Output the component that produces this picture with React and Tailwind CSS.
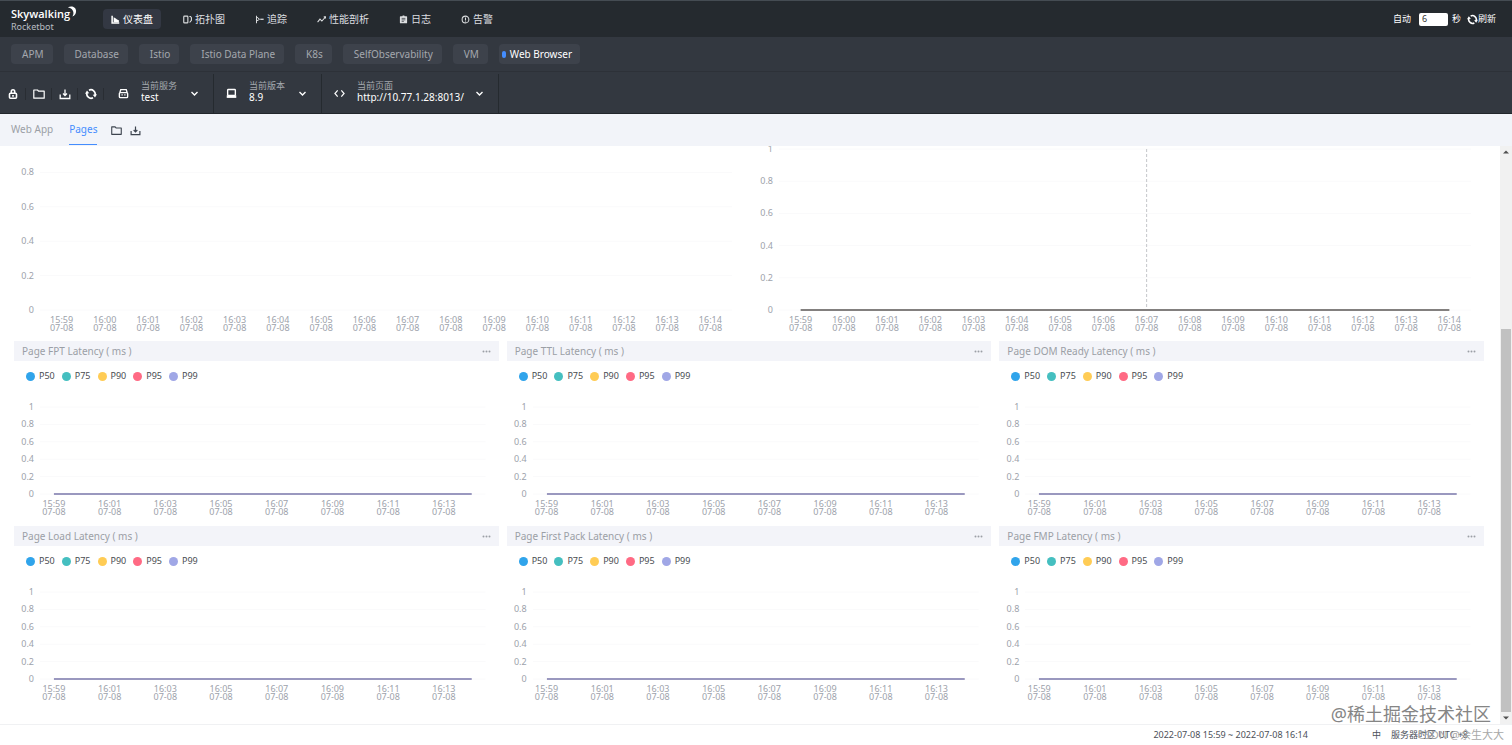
import React, { useState } from "react";

const TABS = [
    { name: "仪表盘", icon: "chart" },
    { name: "拓扑图", icon: "topology" },
    { name: "追踪", icon: "trace" },
    { name: "性能剖析", icon: "profile" },
    { name: "日志", icon: "log" },
    { name: "告警", icon: "alarm" },
];

const GROUPS = ["APM", "Database", "Istio", "Istio Data Plane", "K8s", "SelfObservability", "VM", "Web Browser"];

const TIMES = [
    "15:59", "16:00", "16:01", "16:02", "16:03", "16:04", "16:05", "16:06",
    "16:07", "16:08", "16:09", "16:10", "16:11", "16:12", "16:13", "16:14",
];

const TICKS = ["1", "0.8", "0.6", "0.4", "0.2", "0"];

const LEGEND = [
    { name: "P50", dot: "bg-[#30a4eb]" },
    { name: "P75", dot: "bg-[#45bfc0]" },
    { name: "P90", dot: "bg-[#ffcc55]" },
    { name: "P95", dot: "bg-[#ff6a84]" },
    { name: "P99", dot: "bg-[#a0a7e6]" },
];

const CARDS = [
    "Page FPT Latency ( ms )",
    "Page TTL Latency ( ms )",
    "Page DOM Ready Latency ( ms )",
    "Page Load Latency ( ms )",
    "Page First Pack Latency ( ms )",
    "Page FMP Latency ( ms )",
];

const ICONS = {
    chart: (
        <>
            <path d="M1.5 1v9.5H11" fill="none" stroke="currentColor" strokeWidth="2" />
            <path d="M3.5 3l3 1.5L8 6l2.5 1v2.5h-7z" fill="currentColor" />
        </>
    ),
    topology: (
        <g fill="none" stroke="currentColor" strokeWidth="1.5">
            <rect x="1" y="1.500" width="5.500" height="9" rx="1" />
            <path d="M8.500 2h1.500l1.200 1.500v3.500L8.800 10" />
        </g>
    ),
    trace: (
        <g fill="none" stroke="currentColor" strokeWidth="1.3">
            <path d="M2 1v10M2 2.500l4 3M2 8l4-2.200" />
            <path d="M7 5.700h4.500" strokeWidth="1.700" />
        </g>
    ),
    profile: <path d="M.8 9.500L4 5.500l2.500 2.500 4.500-5M9 2.500h2.300v2" fill="none" stroke="currentColor" strokeWidth="1.400" />,
    log: (
        <>
            <path fill="currentColor" d="M2 1.500h2.500L5 .5h2l.5 1H10a.8.8 0 01.8.8v8a.8.8 0 01-.8.8H2a.8.8 0 01-.8-.8v-8a.8.8 0 01.8-.8z" />
            <path d="M3.500 4.500h5M3.500 6.500h5M3.500 8.500h3" stroke="#252a2f" strokeWidth=".9" />
        </>
    ),
    alarm: (
        <g fill="none" stroke="currentColor" strokeWidth="1.4">
            <circle cx="6" cy="6" r="4.500" />
            <path d="M6 3.200v3.300M6 7.400v1.300" />
        </g>
    ),
    lock: (
        <g fill="none" stroke="currentColor" strokeWidth="1.6">
            <rect x="2.500" y="5.300" width="7" height="5" rx="1" />
            <path d="M4.300 5V3.500a1.700 1.700 0 013.400 0V5M6 7v1.800" />
        </g>
    ),
    folder: <path d="M.8 2h3.700l1 1.200h5.700v7H.8z" fill="none" stroke="currentColor" strokeWidth="1.200" strokeLinejoin="round" />,
    download: <path d="M1.200 6.500v4h9.600v-4M6 1.500v6M4 5.500l2 2 2-2" fill="none" stroke="currentColor" strokeWidth="1.300" />,
    refresh: (
        <>
            <path d="M4 2.200A4.300 4.300 0 0110 7.300M8 9.800A4.300 4.300 0 012 4.700" fill="none" stroke="currentColor" strokeWidth="1.700" />
            <path d="M12 6.300L10 9.500 7.800 6.700zM0 5.700L2 2.500l2.200 2.800z" fill="currentColor" />
        </>
    ),
    service: (
        <g fill="none" stroke="currentColor" strokeWidth="1.500">
            <rect x="1.500" y="5" width="9" height="5.500" rx="1" />
            <path d="M2 5l1-3.200h6L10 5M3.800 7.500h1.400M6.800 7.500h1.400" />
        </g>
    ),
    version: (
        <>
            <rect x="1.800" y="1.700" width="8.400" height="6.500" rx=".8" fill="none" stroke="currentColor" strokeWidth="1.500" />
            <path d="M.8 8h10.400v2.800H.8z" fill="currentColor" />
        </>
    ),
    code: <path d="M4 2.500L1 6l3 3.500M8 2.500L11 6 8 9.500" fill="none" stroke="currentColor" strokeWidth="1.300" />,
    down: <path d="M2 4l4 4 4-4" fill="none" stroke="currentColor" strokeWidth="1.800" />,
    more: (
        <g fill="currentColor">
            <circle cx="2" cy="6" r="1.300" />
            <circle cx="6" cy="6" r="1.300" />
            <circle cx="10" cy="6" r="1.300" />
        </g>
    ),
};

const Icon = ({ name, className = "size-3" }) => (
    <svg className={`shrink-0 ${className}`} viewBox="0 0 12 12" aria-hidden="true">
        {ICONS[name]}
    </svg>
);

const Logo = () => (
    <a href="#home" className="flex w-[92px] flex-col pl-[11px] text-white">
        <span className="flex items-start">
            <span className="font-['Open_Sans',sans-serif] text-[11px] leading-[16px] font-semibold">Skywalking</span>
            <svg className="-ml-1 size-[11px] shrink-0" viewBox="0 0 12 12" aria-hidden="true">
                <path d="M2 1.500C6-.8 11 1 11 5.500c0 3-1.500 5-4 6 1.500-2.500 1.500-5 .2-7C6 2.500 4 1.800 2 1.500z" fill="currentColor" />
            </svg>
        </span>
        <span className="text-[9px] leading-[10px] text-[#b9bdc2]">Rocketbot</span>
    </a>
);

const Header = () => {
    const [active, setActive] = useState("仪表盘");
    const [seconds, setSeconds] = useState("6");

    return (
        <header className="flex h-[37px] items-center border-t border-[#454c53] bg-[#252a2f] pr-4">
            <Logo />
            <nav className="ml-[11px] flex gap-3.5">
                {TABS.map((tab) => (
                    <button
                        key={tab.name}
                        type="button"
                        onClick={() => setActive(tab.name)}
                        className={`flex h-5 items-center gap-[3px] rounded-sm px-2 text-[10px] ${
                            active === tab.name ? "bg-[#333843] text-white" : "text-[#dcdee0]"
                        }`}
                    >
                        <Icon name={tab.icon} className="size-[9px]" />
                        {tab.name}
                    </button>
                ))}
            </nav>
            <div className="ml-auto flex items-center text-[9px] text-white">
                <label htmlFor="interval">自动</label>
                <input
                    id="interval"
                    value={seconds}
                    onChange={(e) => setSeconds(e.target.value)}
                    className="mr-1 ml-2 h-[13px] w-[29px] rounded-xs bg-white pl-[3px] text-[9px] text-[#333]"
                />
                <span>秒</span>
                <button type="button" className="ml-1.5 flex items-center">
                    <Icon name="refresh" className="size-[11px]" />
                    刷新
                </button>
            </div>
        </header>
    );
};

const Groups = () => {
    const [active, setActive] = useState("Web Browser");

    return (
        <nav className="flex h-[35px] items-center gap-[11px] border-b border-[#2d3138] bg-[#333840] pl-[11px]">
            {GROUPS.map((group) => (
                <button
                    key={group}
                    type="button"
                    onClick={() => setActive(group)}
                    className={`flex h-5 items-center rounded-sm bg-[#3d424b] text-[10px] ${
                        active === group ? "gap-1 pr-2 pl-[3px] text-white" : "pr-[9px] pl-[11px] text-[#a4a8ae]"
                    }`}
                >
                    {active === group && <span className="h-[7px] w-1 rounded-xs bg-[#448dfe]" />}
                    {group}
                </button>
            ))}
        </nav>
    );
};

const Selector = ({ id, icon, label, value, width }) => (
    <div className="flex items-center border-r border-[#252a2f] pr-3.5 pl-3">
        <Icon name={icon} className="size-[11px]" />
        <div className="ml-3 flex flex-col pb-1">
            <label htmlFor={id} className="text-[9px] leading-[11px] text-[#a4a8ae]">
                {label}
            </label>
            <select id={id} className={`${width} appearance-none text-[10px] leading-[12px] text-white outline-none`}>
                <option>{value}</option>
            </select>
        </div>
        <Icon name="down" className="size-[9px]" />
    </div>
);

const Toolbar = () => (
    <div className="flex h-[42px] border-b border-[#22262b] bg-[#333840] pt-0.5 text-white">
        <div className="flex items-center pr-0.5">
            {["lock", "folder", "download", "refresh"].map((name) => (
                <button
                    key={name}
                    type="button"
                    aria-label={name}
                    className="flex h-3 w-[26px] items-center justify-center border-r border-[#292d33]"
                >
                    <Icon name={name} />
                </button>
            ))}
        </div>
        <Selector id="service" icon="service" label="当前服务" value="test" width="w-[49px]" />
        <Selector id="version" icon="version" label="当前版本" value="8.9" width="w-[49px]" />
        <Selector id="page" icon="code" label="当前页面" value="http://10.77.1.28:8013/" width="w-[118px]" />
    </div>
);

const SubTabs = () => (
    <nav className="flex h-8 items-stretch bg-[#f2f4f9] pl-[11px] text-[10px] text-[#9b9fa6]">
        <a href="#web-app" className="flex h-[31px] items-center border-b border-transparent">
            Web App
        </a>
        <a href="#pages" className="ml-4 flex h-[31px] items-center border-b border-[#448dfe] text-[#448dfe]">
            Pages
        </a>
        <div className="ml-3.5 flex items-center gap-2 text-[#3d444f]">
            <button type="button" aria-label="folder">
                <Icon name="folder" className="size-[11px]" />
            </button>
            <button type="button" aria-label="download">
                <Icon name="download" className="size-[11px]" />
            </button>
        </div>
    </nav>
);

// Sixteen equal slots, the series runs from the middle of the first to the middle of the last
const Chart = ({ height, step = 1, line, lineWidth = 1, pointer = false }) => (
    <div className="pr-[13px] text-[9px] leading-[8px] text-[#9da2ab]">
        <div className="flex">
            <div className={`flex w-[20px] flex-col justify-between ${height}`}>
                {TICKS.map((tick) => (
                    <span key={tick} className="flex h-0 items-center justify-end">
                        {tick}
                    </span>
                ))}
            </div>
            <svg className={`ml-1.5 min-w-0 flex-1 overflow-visible ${height}`} aria-hidden="true">
                {TICKS.map((tick, i) => (
                    <line key={tick} x1="0" x2="100%" y1={`${i * 20}%`} y2={`${i * 20}%`} stroke="#fafafb" />
                ))}
                {pointer && (
                    <line x1="53.125%" x2="53.125%" y1="0" y2="100%" stroke="#c4c6ca" strokeDasharray="3 2" />
                )}
                {line && (
                    <line x1="3.125%" x2="96.875%" y1="100%" y2="100%" stroke={line} strokeWidth={lineWidth} />
                )}
            </svg>
        </div>
        <div className="mt-1.5 ml-[26px] grid grid-cols-16">
            {TIMES.map((time, i) => (
                <span key={time} className="flex h-4 justify-center">
                    {i % step === 0 && (
                        <span className="shrink-0 text-center whitespace-nowrap">
                            {time}
                            <br />
                            07-08
                        </span>
                    )}
                </span>
            ))}
        </div>
    </div>
);

const LatencyCard = ({ title }) => (
    <section>
        <header className="flex h-5 items-center justify-between bg-[#f3f4f9] px-2 text-[10px] text-[#9b9fa6]">
            <h2>{title}</h2>
            <button type="button" aria-label="more">
                <Icon name="more" className="size-[9px]" />
            </button>
        </header>
        <ul className="mb-4 flex h-[30px] items-center gap-[7px] pl-3 text-[9px] text-[#4a4d52]">
            {LEGEND.map((item) => (
                <li key={item.name} className="flex items-center gap-1">
                    <span className={`size-[9px] rounded-full ${item.dot}`} />
                    {item.name}
                </li>
            ))}
        </ul>
        <Chart height="h-[87px]" step={2} line="#9a98bf" lineWidth={2} />
    </section>
);

const ScrollBar = () => (
    <div className="flex w-3 flex-col bg-[#f1f1f1] text-[#505050]" aria-hidden="true">
        <svg className="h-3 w-3" viewBox="0 0 12 12">
            <path d="M3 7.500h6L6 4.500z" fill="currentColor" />
        </svg>
        <div className="grow-[171] basis-0" />
        <div className="mx-px grow-[382] basis-0 bg-[#c1c1c1]" />
        <svg className="h-3 w-3" viewBox="0 0 12 12">
            <path d="M3 4.500h6L6 7.500z" fill="currentColor" />
        </svg>
    </div>
);

const Footer = () => (
    <footer className="relative flex h-[21px] items-center justify-end border-t border-[#f0f1f3] pr-11 text-[9px] text-[#4c5058]">
        <span>2022-07-08 15:59 ~ 2022-07-08 16:14</span>
        <button type="button" className="ml-16">
            中
        </button>
        <span className="ml-2.5">服务器时区 UTC +8</span>
        <span className="absolute right-2 text-[11px] text-[#a8a8a8]">CSDN @余生大大</span>
        <span className="absolute right-[21px] bottom-5 text-[18px] leading-[22px] text-[#858585]">@稀土掘金技术社区</span>
    </footer>
);

const App = () => {
    return (
        <div className="flex min-h-screen flex-col bg-white font-['Noto_Sans','Noto_Sans_CJK_SC',sans-serif]">
            <Header />
            <Groups />
            <Toolbar />
            <SubTabs />
            <div className="flex flex-1">
                <main className="min-w-0 flex-1 pr-4 pl-3.5">
                    <div className="grid h-[190px] grid-cols-2 content-end items-end gap-2 overflow-hidden pb-1">
                        <Chart height="h-[172px]" />
                        <Chart height="h-[161px]" line="#83807f" lineWidth={2} pointer />
                    </div>
                    <div className="mt-[5px] grid grid-cols-3 gap-x-2 gap-y-2.5">
                        {CARDS.map((title) => (
                            <LatencyCard key={title} title={title} />
                        ))}
                    </div>
                </main>
                <ScrollBar />
            </div>
            <Footer />
        </div>
    );
};

export default App;
